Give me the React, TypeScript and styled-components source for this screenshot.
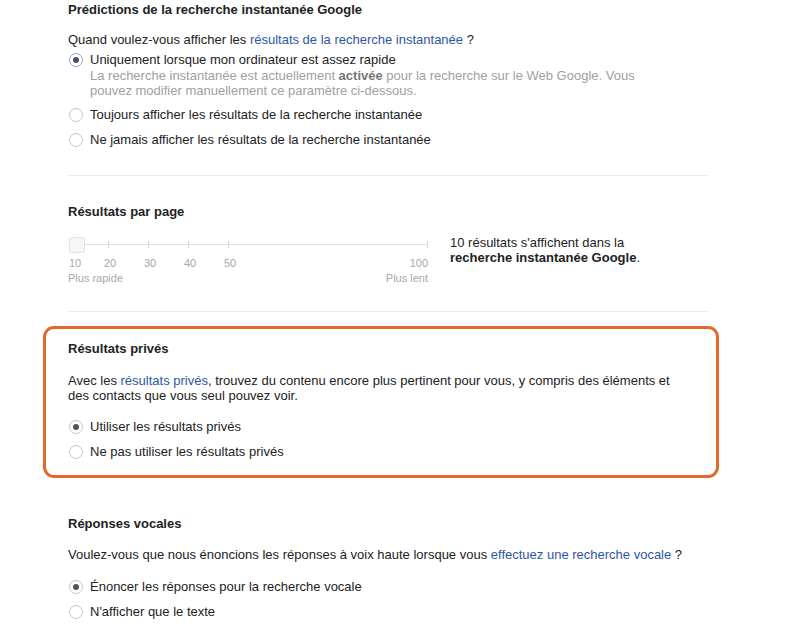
import React from "react";
import styled, { createGlobalStyle } from "styled-components";

const Global = createGlobalStyle`
  html, body { margin: 0; padding: 0; background: #fff; }
  body { font-family: "Liberation Sans", Arial, sans-serif; font-size: 13px; color: #222; }
`;

const Page = styled.div`
  width: 676px;
  padding-left: 43px;
  display: flex;
  flex-direction: column;
`;

const Section = styled.section<{ $highlight?: boolean; $top?: number }>`
  display: flex;
  flex-direction: column;
  margin-top: ${(p) => p.$top ?? 0}px;
  padding: ${(p) => (p.$highlight ? "12px 22px 15px 22px" : "0 25px")};
  border: ${(p) => (p.$highlight ? "3px solid #e2692c" : "none")};
  border-radius: ${(p) => (p.$highlight ? "11px" : "0")};
`;

const Title = styled.h2<{ $top?: number }>`
  margin: ${(p) => p.$top ?? 0}px 0 0 0;
  font-size: 13px;
  font-weight: bold;
  line-height: 16px;
  color: #222;
`;

const Text = styled.p<{ $top?: number }>`
  margin: ${(p) => p.$top ?? 0}px 0 0 0;
  font-size: 13px;
  line-height: 16px;
  color: #222;
`;

const Para = styled.p<{ $top?: number }>`
  margin: ${(p) => p.$top ?? 0}px 0 0 0;
  font-size: 13px;
  line-height: 15px;
  color: #222;
  width: 615px;
`;

const Link = styled.a`
  color: #2d56a6;
  text-decoration: none;
`;

const RadioGroup = styled.div<{ $top?: number }>`
  display: flex;
  flex-direction: column;
  gap: 9px;
  margin-top: ${(p) => p.$top ?? 0}px;
`;

const Option = styled.div`
  display: flex;
  flex-direction: column;
`;

const RadioRow = styled.label`
  display: flex;
  align-items: center;
  gap: 7px;
  line-height: 16px;
  height: 16px;
  padding-left: 1px;
  color: #222;
`;

const RadioCircle = styled.span<{ $checked?: boolean; $focus?: boolean }>`
  width: 12px;
  height: 12px;
  border-radius: 50%;
  border: 1px solid ${(p) => (p.$focus ? "#8aa7d6" : "#c8c8c8")};
  background: #fff;
  display: flex;
  align-items: center;
  justify-content: center;
  flex-shrink: 0;
  box-shadow: inset 0 1px 1px rgba(0, 0, 0, 0.04);
  &::after {
    content: "";
    width: 6px;
    height: 6px;
    border-radius: 50%;
    background: ${(p) => (p.$focus ? "#4a5060" : "#555")};
    display: ${(p) => (p.$checked ? "block" : "none")};
  }
`;

const Hint = styled.div`
  padding-left: 22px;
  color: #a0a0a0;
  line-height: 15px;
  width: 560px;
  b { color: #777; }
`;

const Divider = styled.hr<{ $top?: number }>`
  width: 640px;
  margin: ${(p) => p.$top ?? 0}px 0 0 0;
  border: none;
  border-top: 1px solid #ebebeb;
  height: 0;
`;

const SliderRow = styled.div`
  display: flex;
  gap: 22px;
  margin-top: 17px;
`;

const Slider = styled.div`
  width: 360px;
  display: flex;
  flex-direction: column;
`;

const Track = styled.div`
  position: relative;
  height: 16px;
`;

const Rail = styled.div`
  position: absolute;
  left: 16px;
  right: 0;
  top: 7px;
  border-top: 1px solid #e2e2e2;
`;

const Tick = styled.div`
  position: absolute;
  top: 4px;
  width: 1px;
  height: 7px;
  background: #d6d6d6;
`;

const Handle = styled.div`
  position: absolute;
  left: 1px;
  top: 0;
  width: 14px;
  height: 14px;
  border: 1px solid #e4e4e4;
  background: #f6f6f6;
  border-radius: 2px;
`;

const Scale = styled.div`
  position: relative;
  height: 15px;
  margin-top: 3px;
  color: #a8a8a8;
  font-size: 11px;
  line-height: 15px;
`;

const ScaleLabel = styled.span`
  position: absolute;
  top: 0;
  white-space: nowrap;
`;

const Ends = styled.div`
  display: flex;
  justify-content: space-between;
  color: #a8a8a8;
  font-size: 11px;
  line-height: 15px;
`;

const SliderInfo = styled.div`
  margin-top: -2px;
  line-height: 15px;
  color: #222;
`;

function Radio({ label, checked, focus }: { label: string; checked?: boolean; focus?: boolean }) {
  return (
    <RadioRow>
      <RadioCircle $checked={checked} $focus={focus} />
      <span>{label}</span>
    </RadioRow>
  );
}

const ticks = [20, 30, 40, 50, 100];
const xFor = (v: number) => (v - 10) * 4;

export default function App() {
  return (
    <>
      <Global />
      <Page>
        <Section>
          <Title $top={2}>Prédictions de la recherche instantanée Google</Title>
          <Text $top={14}>
            Quand voulez-vous afficher les <Link href="#">résultats de la recherche instantanée</Link> ?
          </Text>
          <RadioGroup $top={4}>
            <Option>
              <Radio label="Uniquement lorsque mon ordinateur est assez rapide" checked focus />
              <Hint>
                La recherche instantanée est actuellement <b>activée</b> pour la recherche sur le Web Google. Vous
                pouvez modifier manuellement ce paramètre ci-dessous.
              </Hint>
            </Option>
            <Radio label="Toujours afficher les résultats de la recherche instantanée" />
            <Radio label="Ne jamais afficher les résultats de la recherche instantanée" />
          </RadioGroup>
          <Divider $top={27} />
          <Title $top={28}>Résultats par page</Title>
          <SliderRow>
            <Slider>
              <Track>
                <Rail />
                {ticks.map((t) => (
                  <Tick key={t} style={{ left: Math.min(xFor(t), 359) }} />
                ))}
                <Handle />
              </Track>
              <Scale>
                <ScaleLabel style={{ left: 1 }}>10</ScaleLabel>
                {[20, 30, 40, 50].map((t) => (
                  <ScaleLabel key={t} style={{ left: xFor(t) - 4 }}>
                    {t}
                  </ScaleLabel>
                ))}
                <ScaleLabel style={{ right: 0 }}>100</ScaleLabel>
              </Scale>
              <Ends>
                <span>Plus rapide</span>
                <span>Plus lent</span>
              </Ends>
            </Slider>
            <SliderInfo>
              10 résultats s'affichent dans la
              <br />
              <b>recherche instantanée Google</b>.
            </SliderInfo>
          </SliderRow>
          <Divider $top={25} />
        </Section>
        <Section $highlight $top={14}>
          <Title>Résultats privés</Title>
          <Para $top={16}>
            Avec les <Link href="#">résultats privés</Link>, trouvez du contenu encore plus pertinent pour vous, y
            compris des éléments et des contacts que vous seul pouvez voir.
          </Para>
          <RadioGroup $top={16}>
            <Radio label="Utiliser les résultats privés" checked />
            <Radio label="Ne pas utiliser les résultats privés" />
          </RadioGroup>
        </Section>
        <Section $top={38}>
          <Title>Réponses vocales</Title>
          <Text $top={15}>
            Voulez-vous que nous énoncions les réponses à voix haute lorsque vous{" "}
            <Link href="#">effectuez une recherche vocale</Link> ?
          </Text>
          <RadioGroup $top={16}>
            <Radio label="Énoncer les réponses pour la recherche vocale" checked />
            <Radio label="N'afficher que le texte" />
          </RadioGroup>
        </Section>
      </Page>
    </>
  );
}
